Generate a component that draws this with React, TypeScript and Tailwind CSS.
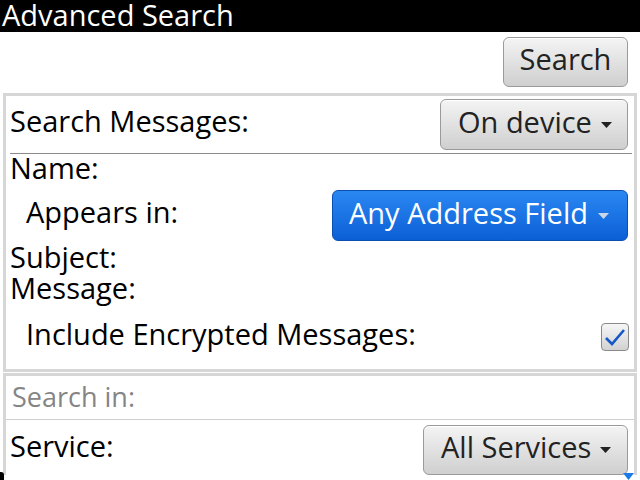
import React from 'react';

const Caret = ({ className }: { className: string }) => (
  <svg className={className} width="11" height="6" viewBox="0 0 11 6">
    <path d="M0 0h11L5.5 6z" fill="currentColor" />
  </svg>
);

const GrayButton = ({ label, caret, className }: { label: string; caret?: boolean; className: string }) => (
  <button
    className={`flex items-center rounded-[6px] border border-[#9a9a9a] bg-gradient-to-b from-[#f4f4f4] to-[#cfcfcf] pb-[6px] text-[29px] leading-[28px] text-[#222] shadow-[inset_0_1px_0_#fff] ${className}`}
  >
    <span>{label}</span>
    {caret && <Caret className="ml-[9px] mt-[6px] text-[#222]" />}
  </button>
);

const App = () => {
  return (
    <div className="relative h-[480px] w-[640px] overflow-hidden bg-white font-['Open_Sans',sans-serif] text-black">
      {/* title bar */}
      <div className="h-[32px] bg-black pl-[2px] text-[29px] leading-[30px] text-white">Advanced Search</div>

      {/* toolbar */}
      <div className="flex h-[61px] justify-end pr-[12px] pt-[5px]">
        <GrayButton label="Search" className="h-[50px] w-[125px] justify-center" />
      </div>

      {/* first panel */}
      <div className="ml-[3px] w-[634px] border-[3px] border-[#d6d6d6] pb-[18px] pt-[3px] text-[29px] leading-[28px]">
        <div className="flex items-start justify-between pl-[4px] pr-[6px]">
          <span className="mt-[8px]">Search Messages:</span>
          <GrayButton label="On device" caret className="h-[51px] w-[188px] pl-[17px]" />
        </div>
        <div className="ml-[4px] mr-[2px] mt-[3px] h-px bg-[#8c8c8c]" />
        <div className="pl-[4px]">Name:</div>
        <div className="mt-[8px] flex items-start justify-between pl-[20px] pr-[6px]">
          <span className="mt-[8px]">Appears in:</span>
          <button className="flex h-[51px] w-[296px] items-center rounded-[6px] border border-[#0a4fb0] bg-gradient-to-b from-[#2a88f2] to-[#0c5fd6] pb-[6px] pl-[16px] text-white">
            <span>Any Address Field</span>
            <Caret className="ml-[10px] mt-[6px] text-[#c9d6ea]" />
          </button>
        </div>
        <div className="mt-[2px] pl-[4px]">Subject:</div>
        <div className="mt-[3px] pl-[4px]">Message:</div>
        <div className="mt-[18px] flex items-start justify-between pl-[20px] pr-[5px]">
          <span>Include Encrypted Messages:</span>
          <div className="mt-[3px] flex h-[28px] w-[28px] items-center justify-center rounded-[4px] border border-[#8a8a8a] bg-gradient-to-b from-[#f6f6f6] to-[#d2d2d2]">
            <svg width="22" height="20" viewBox="0 0 22 20">
              <path d="M2 11l6 6L20 3" fill="none" stroke="#1558c8" strokeWidth="2.6" />
            </svg>
          </div>
        </div>
      </div>

      {/* second panel */}
      <div className="ml-[3px] mt-px w-[634px] border-[3px] border-b-0 border-[#d6d6d6] text-[29px] leading-[28px]">
        <div className="mt-[7px] pl-[6px] text-[27px] font-medium text-[#858585]">Search in:</div>
        <div className="mt-[8px] h-px bg-[#cfcfcf]" />
        <div className="mt-[5px] flex items-start justify-between pl-[4px] pr-[6px]">
          <span className="mt-[7px]">Service:</span>
          <GrayButton label="All Services" caret className="h-[50px] w-[205px] pl-[17px]" />
        </div>
      </div>

      {/* scroll indicators */}
      <svg className="absolute bottom-0 right-[6px]" width="11" height="7" viewBox="0 0 11 7">
        <path d="M0 0h11L5.5 7z" fill="#1a7ae6" />
      </svg>
      <div className="absolute bottom-0 left-0 h-[8px] w-[4px] rounded-tr-[3px] bg-black" />
    </div>
  );
};

export default App;
